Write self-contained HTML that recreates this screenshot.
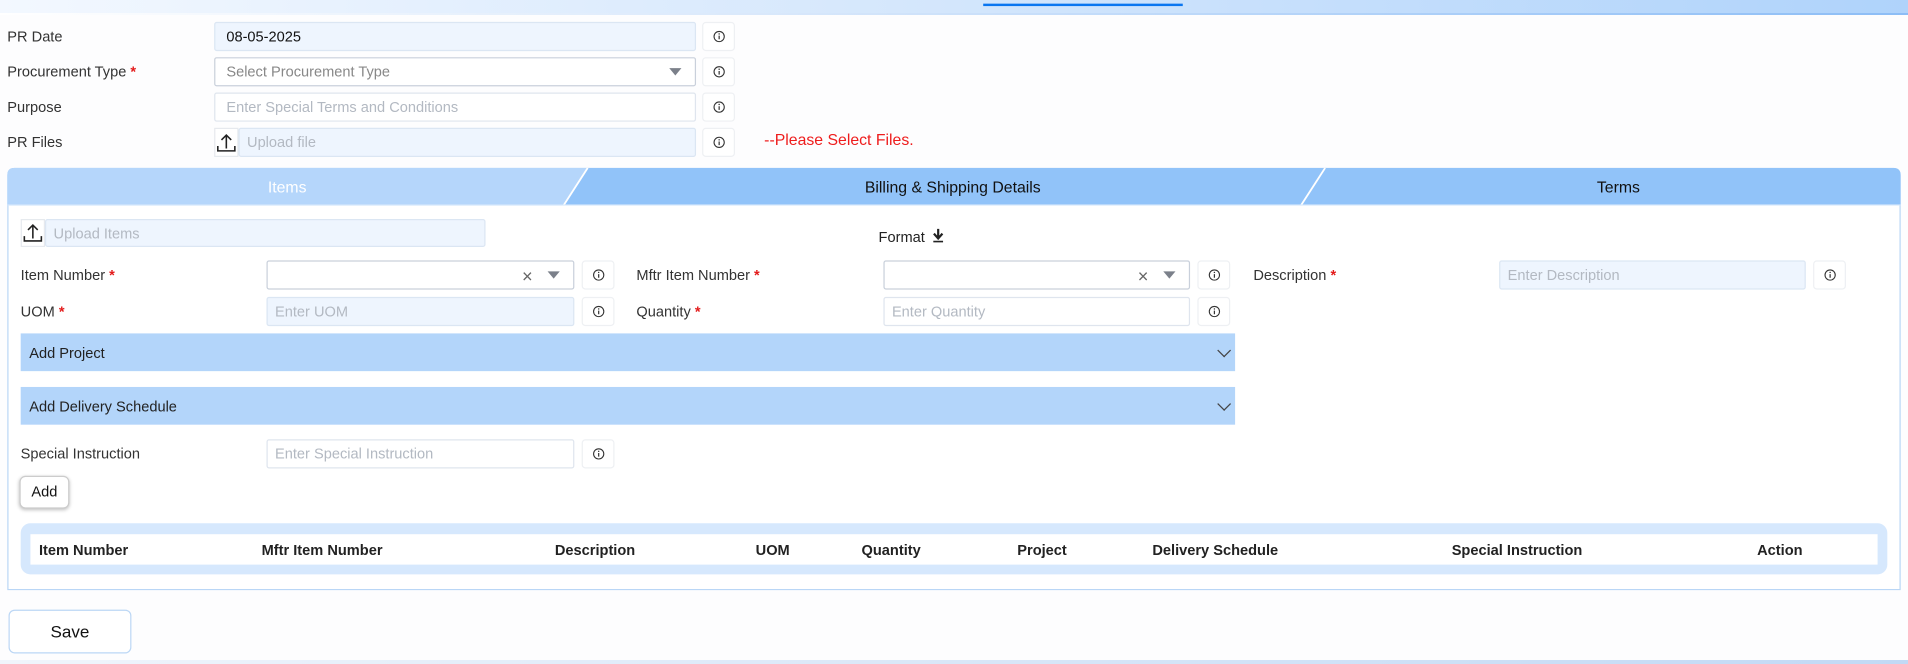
<!DOCTYPE html>
<html><head><meta charset="utf-8"><style>
*{box-sizing:border-box;margin:0;padding:0}
html,body{width:1908px;height:664px;overflow:hidden;background:#fdfdfe;font-family:"Liberation Sans",sans-serif;color:#222}
#s{position:absolute;left:0;top:0;width:1568px;height:546px;transform:scale(1.21684);transform-origin:0 0}
.a{position:absolute}
.lbl{position:absolute;font-size:12px;color:#333;line-height:14px}
.lbl b{color:#e31b1b;font-weight:bold}
.in{position:absolute;height:24px;border:1px solid #dfe5ee;border-radius:2px;font-size:12px;color:#b3b9c2;padding-left:9px;line-height:22px;background:#fff}
.lb{background:#eef5fe;border-color:#dbe6f3}
.info{position:absolute;width:27px;height:24px;border:1px solid #eef0f3;border-radius:3px;background:#fff}
.info svg{position:absolute;left:8px;top:6px}
.arr{position:absolute;width:0;height:0;border-left:5px solid transparent;border-right:5px solid transparent;border-top:6px solid #7b808a}
.x{position:absolute;font-size:15px;color:#666;line-height:14px}
.up{position:absolute;width:20px;height:24px;border:1px solid #e6e9ee;background:#fff}
.bar{position:absolute;left:17px;width:998px;height:31px;background:#b3d5fa;font-size:12px;color:#222;padding:9px 0 0 7px}
.chev{position:absolute;right:5px;top:10px;width:8px;height:8px;border-right:1.3px solid #444;border-bottom:1.3px solid #444;transform:rotate(45deg)}
</style></head><body>
<div class="a" style="left:0;top:0;width:1908px;height:13px;background:linear-gradient(90deg,#f3f8ff,#d3e6fc 50%,#afd3fb)"></div>
<div class="a" style="left:0;top:13px;width:1908px;height:2px;background:linear-gradient(90deg,#fff,#d9e8fb 40%,#8cbdf6)"></div>
<div class="a" style="left:0;top:660px;width:1908px;height:4px;background:linear-gradient(90deg,#f0f5fc,#d9e7f8 50%,#c2d9f5)"></div>
<svg width="0" height="0" style="position:absolute"><symbol id="i" viewBox="0 0 10 10"><circle cx="5" cy="5" r="4.2" fill="none" stroke="#333" stroke-width="0.9"/><path d="M5 4.3v3" stroke="#333" stroke-width="1"/><circle cx="5" cy="2.9" r="0.6" fill="#333"/></symbol></svg>
<div id="s">
<div class="a" style="left:808px;top:3px;width:164px;height:2px;background:#0a76f0"></div>

<div class="lbl" style="left:6px;top:23px">PR Date</div>
<div class="in lb" style="left:176px;top:18px;width:396px;color:#111;font-size:12px">08-05-2025</div>
<div class="info" style="left:577px;top:18px"><svg width="10" height="10"><use href="#i"/></svg></div>

<div class="lbl" style="left:6px;top:52px">Procurement Type <b>*</b></div>
<div class="in" style="left:176px;top:47px;width:396px;border-color:#c9d0db;color:#888">Select Procurement Type</div>
<div class="arr" style="left:550px;top:56px"></div>
<div class="info" style="left:577px;top:47px"><svg width="10" height="10"><use href="#i"/></svg></div>

<div class="lbl" style="left:6px;top:81px">Purpose</div>
<div class="in" style="left:176px;top:76px;width:396px">Enter Special Terms and Conditions</div>
<div class="info" style="left:577px;top:76px"><svg width="10" height="10"><use href="#i"/></svg></div>

<div class="lbl" style="left:6px;top:110px">PR Files</div>
<div class="up" style="left:176px;top:105px"><svg width="18" height="22" viewBox="0 0 18 22"><path d="M9 16V5M5 9l4-4 4 4M2 14v4h14v-4" fill="none" stroke="#222" stroke-width="1.3"/></svg></div>
<div class="in lb" style="left:196px;top:105px;width:376px;padding-left:6px">Upload file</div>
<div class="info" style="left:577px;top:105px"><svg width="10" height="10"><use href="#i"/></svg></div>
<div class="a" style="left:628px;top:107px;font-size:13px;color:#ee1c1c">--Please Select Files.</div>

<div class="a" style="left:6px;top:138px;width:1556px;height:347px;border:1px solid #b9d6f6;border-radius:6px 6px 0 0;background:#fff"></div>
<svg class="a" style="left:6px;top:138px" width="1556" height="31">
<path d="M0 6Q0 0 6 0H1550Q1556 0 1556 6V31H0Z" fill="#91c3f9"/>
<path d="M0 6Q0 0 6 0H477L456 31H0Z" fill="#b5d6fb"/>
<path d="M477 0L457 31M1083 0L1063 31" stroke="#fff" stroke-width="1.5"/>
<rect x="0" y="30" width="1556" height="1" fill="#d7e8fb"/>
</svg>
<div class="a" style="left:6px;top:146px;width:460px;text-align:center;font-size:13px;color:#fff">Items</div>
<div class="a" style="left:560px;top:146px;width:446px;text-align:center;font-size:13px;color:#111">Billing &amp; Shipping Details</div>
<div class="a" style="left:1100px;top:146px;width:460px;text-align:center;font-size:13px;color:#111">Terms</div>

<div class="up" style="left:17px;top:180px;height:23px"><svg width="18" height="22" viewBox="0 0 18 22"><path d="M9 15V4M5 8l4-4 4 4M2 13v4h14v-4" fill="none" stroke="#222" stroke-width="1.3"/></svg></div>
<div class="in lb" style="left:37px;top:180px;width:362px;height:23px;padding-left:6px">Upload Items</div>
<div class="a" style="left:722px;top:188px;font-size:12px;color:#222">Format</div>
<svg class="a" style="left:766px;top:188px" width="10" height="12"><path d="M5 0v7M1.5 4L5 8 8.5 4" fill="none" stroke="#222" stroke-width="1.8"/><path d="M1 10.5h8" stroke="#222" stroke-width="1.3"/></svg>

<div class="lbl" style="left:17px;top:219px">Item Number <b>*</b></div>
<div class="in" style="left:219px;top:214px;width:253px;border-color:#c9d0db"></div>
<div class="x" style="left:429px;top:221px">×</div><div class="arr" style="left:450px;top:223px"></div>
<div class="info" style="left:478px;top:214px"><svg width="10" height="10"><use href="#i"/></svg></div>
<div class="lbl" style="left:523px;top:219px">Mftr Item Number <b>*</b></div>
<div class="in" style="left:726px;top:214px;width:252px;border-color:#c9d0db"></div>
<div class="x" style="left:935px;top:221px">×</div><div class="arr" style="left:956px;top:223px"></div>
<div class="info" style="left:984px;top:214px"><svg width="10" height="10"><use href="#i"/></svg></div>
<div class="lbl" style="left:1030px;top:219px">Description <b>*</b></div>
<div class="in lb" style="left:1232px;top:214px;width:252px;padding-left:6px">Enter Description</div>
<div class="info" style="left:1490px;top:214px"><svg width="10" height="10"><use href="#i"/></svg></div>

<div class="lbl" style="left:17px;top:249px">UOM <b>*</b></div>
<div class="in lb" style="left:219px;top:244px;width:253px;padding-left:6px">Enter UOM</div>
<div class="info" style="left:478px;top:244px"><svg width="10" height="10"><use href="#i"/></svg></div>
<div class="lbl" style="left:523px;top:249px">Quantity <b>*</b></div>
<div class="in" style="left:726px;top:244px;width:252px;padding-left:6px">Enter Quantity</div>
<div class="info" style="left:984px;top:244px"><svg width="10" height="10"><use href="#i"/></svg></div>

<div class="bar" style="top:274px">Add Project<div class="chev"></div></div>
<div class="bar" style="top:318px">Add Delivery Schedule<div class="chev"></div></div>

<div class="lbl" style="left:17px;top:366px">Special Instruction</div>
<div class="in" style="left:219px;top:361px;width:253px;padding-left:6px">Enter Special Instruction</div>
<div class="info" style="left:478px;top:361px"><svg width="10" height="10"><use href="#i"/></svg></div>

<div class="a" style="left:16px;top:391px;width:41px;height:27px;border:1px solid #ccc;border-radius:5px;background:#fff;box-shadow:0 1px 3px rgba(0,0,0,.25);font-size:12px;text-align:center;line-height:25px;color:#111">Add</div>

<div class="a" style="left:17px;top:430px;width:1534px;height:42px;background:#d6e8fd;border-radius:8px"></div>
<div class="a" style="left:25px;top:439px;width:1518px;height:25px;background:#fff"></div>
<div class="a" style="top:445px;left:0;font-size:12px;font-weight:bold;color:#222;width:1568px;height:16px">
<span class="a" style="left:32px">Item Number</span>
<span class="a" style="left:215px">Mftr Item Number</span>
<span class="a" style="left:456px">Description</span>
<span class="a" style="left:621px">UOM</span>
<span class="a" style="left:708px">Quantity</span>
<span class="a" style="left:836px">Project</span>
<span class="a" style="left:947px">Delivery Schedule</span>
<span class="a" style="left:1193px">Special Instruction</span>
<span class="a" style="left:1444px">Action</span>
</div>

<div class="a" style="left:7px;top:501px;width:101px;height:36px;border:1px solid #bcd7f5;border-radius:5px;background:#fff;font-size:14px;text-align:center;line-height:34px;color:#111">Save</div>
</div>
</body></html>
